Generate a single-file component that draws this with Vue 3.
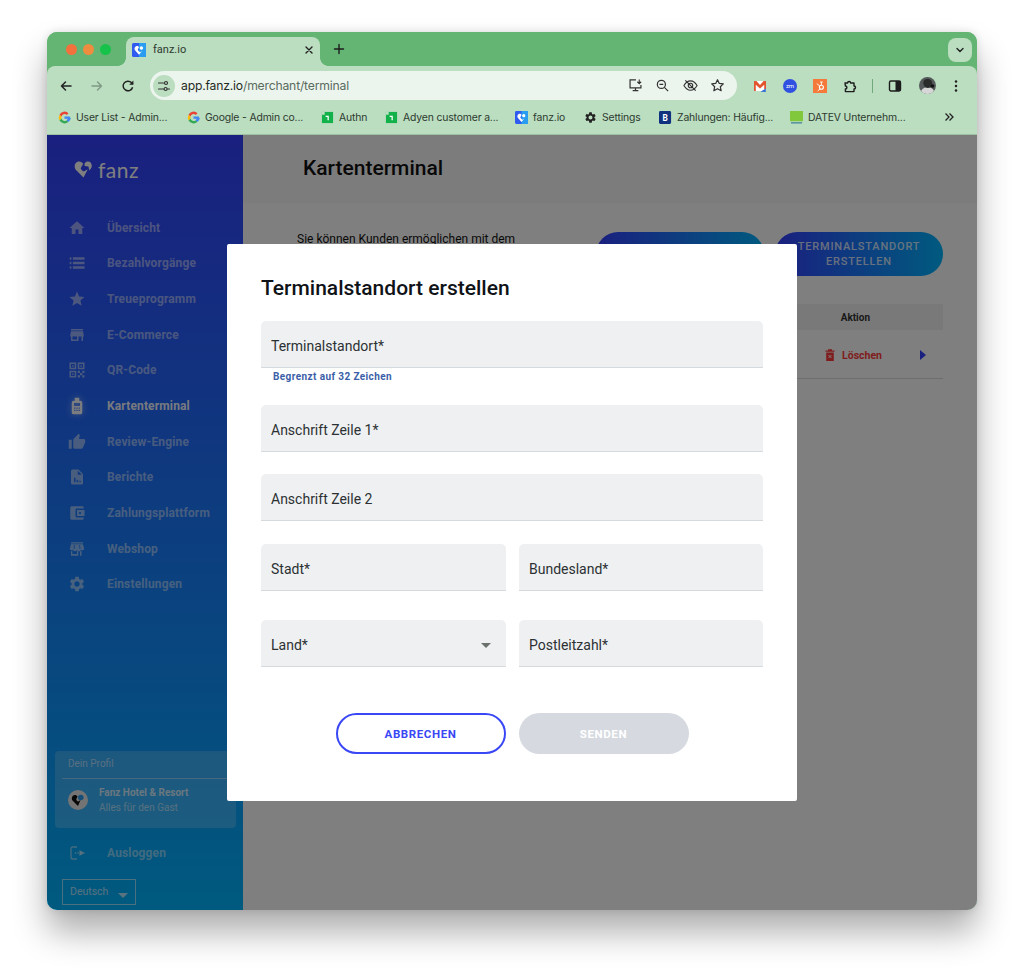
<template>
  <div class="page">
    <div class="window">
      <!-- Tab-Leiste -->
      <div class="tabstrip">
        <div class="lights">
          <span class="light red"></span>
          <span class="light amber"></span>
          <span class="light green"></span>
        </div>
        <div class="tab">
          <svg class="favicon" viewBox="0 0 14 14">
            <rect width="14" height="14" rx="1.5" fill="#2f5bf0" />
            <rect x="7" width="7" height="14" fill="#2a9df0" />
            <path d="M7 11.8 3.2 7.6C1.8 5.8 3 3 5 3c1 0 1.6.5 2 1.2L5.8 6.6c.5 1.4 1.2 2.2 2.3 2.7l2-1.2z" fill="#fff" />
            <circle cx="9.4" cy="5" r="1.7" fill="#fff" />
          </svg>
          <span class="tab-title">fanz.io</span>
          <svg class="tab-close" viewBox="0 0 10 10"><path d="M2 2l6 6M8 2l-6 6" stroke="#222" stroke-width="1.4" stroke-linecap="round" /></svg>
        </div>
        <svg class="new-tab" viewBox="0 0 12 12"><path d="M6 1.5v9M1.5 6h9" stroke="#1c1c1c" stroke-width="1.4" stroke-linecap="round" /></svg>
        <div class="tab-menu">
          <svg viewBox="0 0 10 10" width="10" height="10"><path d="M2 3.5 5 6.5 8 3.5" fill="none" stroke="#222" stroke-width="1.4" stroke-linecap="round" /></svg>
        </div>
      </div>

      <!-- Adressleiste -->
      <div class="toolbar">
        <div class="nav-row">
          <svg class="nav-icon" viewBox="0 0 14 14"><path d="M12 7H2.5M6.5 3 2.5 7l4 4" fill="none" stroke="#222" stroke-width="1.5" stroke-linecap="round" stroke-linejoin="round" /></svg>
          <svg class="nav-icon" viewBox="0 0 14 14"><path d="M2 7h9.5M7.5 3l4 4-4 4" fill="none" stroke="#7f9a84" stroke-width="1.4" stroke-linecap="round" stroke-linejoin="round" /></svg>
          <svg class="nav-icon" viewBox="0 0 14 14"><path d="M11.6 8.2A4.8 4.8 0 1 1 10.4 3.6L12 5" fill="none" stroke="#222" stroke-width="1.5" /><path d="M12.4 1.6v4.2H8.2z" fill="#222" /></svg>
          <div class="omnibox">
            <span class="site-info">
              <svg viewBox="0 0 14 14" width="14" height="14">
                <path d="M1.5 4h5M10.5 10h2M1.5 10h5" stroke="#333" stroke-width="1.2" stroke-linecap="round" />
                <circle cx="9" cy="4" r="1.5" fill="none" stroke="#333" stroke-width="1.2" />
                <circle cx="8.6" cy="10" r="1.5" fill="none" stroke="#333" stroke-width="1.2" />
              </svg>
            </span>
            <span class="url"><span class="url-host">app.fanz.io</span>/merchant/terminal</span>
            <div class="omni-icons">
              <svg viewBox="0 0 16 16"><path d="M8.5 2H2.2v8.600h11.600V7.500M8 10.600V13M5 13.400h6" fill="none" stroke="#333" stroke-width="1.3" /><path d="M12 1.500v4M10 4l2 2 2-2" fill="none" stroke="#333" stroke-width="1.2" /></svg>
              <svg viewBox="0 0 16 16"><circle cx="6.800" cy="6.800" r="4.300" fill="none" stroke="#333" stroke-width="1.3" /><path d="M10 10l4 4M4.800 6.800h4" stroke="#333" stroke-width="1.3" /></svg>
              <svg viewBox="0 0 16 16"><path d="M1 8c2-3.400 4.400-5 7-5s5 1.600 7 5c-2 3.400-4.400 5-7 5s-5-1.600-7-5z" fill="none" stroke="#333" stroke-width="1.2" /><circle cx="8" cy="8" r="2.400" fill="none" stroke="#333" stroke-width="1.2" /><path d="M2.500 2.500l11 11" stroke="#333" stroke-width="1.3" /></svg>
              <svg viewBox="0 0 16 16"><path d="m8 1.800 1.900 4 4.300.5-3.200 3 .9 4.300L8 11.400l-3.900 2.200.9-4.300-3.200-3 4.300-.5z" fill="none" stroke="#333" stroke-width="1.3" stroke-linejoin="round" /></svg>
            </div>
          </div>
          <div class="ext-icons">
            <svg viewBox="0 0 14 14"><rect x="1" y="2" width="12" height="10" fill="#fff" /><path d="M1 2h2.400L7 6l3.600-4H13v8h-1.800V5.800L7 9.400 2.800 5.800V12H1z" fill="#e2552f" /><path d="M7.500 12.800 12.800 9.500V13z" fill="#2f6fd6" /></svg>
            <svg viewBox="0 0 14 14"><circle cx="7" cy="7" r="7" fill="#2f50e0" /><text x="7" y="9" text-anchor="middle" font-size="6" fill="#fff" font-family="Roboto, sans-serif">zm</text></svg>
            <svg viewBox="0 0 14 14"><rect width="14" height="14" fill="#f5793b" /><circle cx="8.400" cy="8.200" r="2" fill="none" stroke="#fff" stroke-width="1.1" /><path d="M8.400 6V3M7 3h2.800M7 10l-2.300 2M6.800 7 3.800 4.600" stroke="#fff" stroke-width=".9" /></svg>
            <svg viewBox="0 0 14 14"><path d="M2 4h2.600a1.500 1.500 0 0 1 3 0h3.400v3a1.500 1.500 0 0 1 0 3v2.600H2.400V10a1.500 1.500 0 0 0 0-3z" fill="none" stroke="#1c1c1c" stroke-width="1.4" stroke-linejoin="round" /></svg>
          </div>
          <span class="tool-sep"></span>
          <svg class="panel-icon" viewBox="0 0 14 14"><rect x="1.500" y="2" width="11" height="10" rx="1.400" fill="none" stroke="#1c1c1c" stroke-width="1.4" /><rect x="7.500" y="2" width="5" height="10" fill="#1c1c1c" /></svg>
          <svg class="profile-pic" viewBox="0 0 17 17">
            <circle cx="8.500" cy="8.500" r="8.500" fill="#55595a" />
            <path d="M2 14c2-3 4-4 6.500-4s5 1 6.500 4a8.500 8.500 0 0 1-13 0z" fill="#d6d6d6" />
            <path d="M5 3.500c2-2 6-2 7.500.5s.5 5.500-1.500 6.500-5 .5-6-2-1-3.500 0-5z" fill="#2a2c2c" />
            <circle cx="13.500" cy="9" r="1.800" fill="#111" />
          </svg>
          <svg class="dots" viewBox="0 0 4 14"><circle cx="2" cy="2.500" r="1.250" fill="#222" /><circle cx="2" cy="7" r="1.250" fill="#222" /><circle cx="2" cy="11.500" r="1.250" fill="#222" /></svg>
        </div>
        <div class="bookmarks">
          <div v-for="b in bookmarks" :key="b.label + b.w" class="bookmark" :style="{ width: b.w + 'px' }">
            <svg v-if="b.icon === 'google'" class="bm-icon" viewBox="0 0 14 14">
              <path d="M7 3.200c1 0 1.800.4 2.400 1L11.300 2.300A6 6 0 0 0 1.600 4.200l2.200 1.700C4.300 4.300 5.500 3.200 7 3.200z" fill="#ea4335" />
              <path d="M12.800 7.200c0-.5 0-.9-.1-1.200H7v2.400h3.300c-.2.800-.6 1.400-1.200 1.800l2 1.600c1.100-1.100 2.700-2.600 2.700-4.600z" fill="#4285f4" />
              <path d="M3.800 8.200 1.600 9.900a6 6 0 0 0 9.500 1.900l-2-1.600c-.6.4-1.300.6-2.100.6-1.500 0-2.800-1-3.200-2.600z" fill="#34a853" />
              <path d="M3.800 8.200a3.600 3.600 0 0 1 0-2.300L1.600 4.200a6 6 0 0 0 0 5.700z" fill="#fbbc05" />
            </svg>
            <svg v-else-if="b.icon === 'adyen'" class="bm-icon" viewBox="0 0 14 14">
              <rect x="1" y="1" width="12" height="12" fill="#12b24a" />
              <path d="M1 1h3v3H1z" fill="#bbddc0" />
              <path d="M5 5h3.400v5H7V6.400H5z" fill="#fff" />
            </svg>
            <svg v-else-if="b.icon === 'fanz'" class="bm-icon" viewBox="0 0 14 14">
              <rect width="14" height="14" rx="1.500" fill="#2f5bf0" />
              <rect x="7" width="7" height="14" fill="#2a9df0" />
              <path d="M7 11.800 3.200 7.600C1.800 5.800 3 3 5 3c1 0 1.600.5 2 1.200L5.800 6.600c.5 1.400 1.200 2.200 2.300 2.700l2-1.200z" fill="#fff" />
              <circle cx="9.400" cy="5" r="1.700" fill="#fff" />
            </svg>
            <svg v-else-if="b.icon === 'gear'" class="bm-icon" viewBox="0 0 24 24">
              <path :d="icons.gear" fill="#222" />
            </svg>
            <svg v-else-if="b.icon === 'b'" class="bm-icon" viewBox="0 0 14 14">
              <rect width="13" height="14" rx="1.500" fill="#10327e" />
              <text x="6.500" y="10.500" text-anchor="middle" font-size="9" font-weight="700" fill="#fff" font-family="Roboto, sans-serif">B</text>
            </svg>
            <svg v-else class="bm-icon" viewBox="0 0 14 14">
              <rect width="14" height="11" fill="#82c83c" />
              <rect x="1" y="12" width="12" height="1.500" fill="#4b8a9a" />
            </svg>
            <span>{{ b.label }}</span>
          </div>
          <svg class="bm-more" viewBox="0 0 10 10"><path d="M1.500 1.500 5 5 1.500 8.500M5.500 1.500 9 5 5.500 8.500" fill="none" stroke="#222" stroke-width="1.3" /></svg>
        </div>
      </div>

      <!-- App -->
      <div class="app">
        <aside class="sidebar">
          <div class="logo">
            <svg viewBox="0 0 18 18" width="18" height="18">
              <path d="M9.500 17.500 2 10C-.6 7 .9 1.500 5 1.500c2 0 3.300 1 4.200 2.300L6.700 8.300c.7 1.700 1.600 2.600 3.100 3.300l4-2.400z" fill="#fff" />
              <path d="M10.600 3.200c1-1.100 2.100-1.700 3.300-1.700 3.500 0 5 4.400 3 7.100l-1.600 1.800-.9-3.800-3.900-.7z" fill="#fff" />
            </svg>
            <span class="logo-text">fanz</span>
          </div>
          <nav class="menu">
            <a v-for="item in menu" :key="item.label" :class="['menu-item', { active: item.active }]">
              <svg class="menu-icon" viewBox="0 0 24 24">
                <path :d="icons[item.icon]" fill="currentColor" fill-rule="evenodd" />
              </svg>
              <span>{{ item.label }}</span>
            </a>
          </nav>
          <div class="side-bottom">
            <div class="profile-card">
              <div class="profile-head">Dein Profil</div>
              <div class="profile-body">
                <svg class="profile-logo" viewBox="0 0 20 20">
                  <circle cx="10" cy="10" r="10" fill="#e8e8e8" />
                  <path d="M10 16 4.500 10.500C3 8.500 4.200 5 6.800 5c1.300 0 2.200.6 2.800 1.500L8.200 9.300c.4 1.200 1 1.800 2 2.300l2.400-1.500z" fill="#111" />
                  <circle cx="12.800" cy="7.500" r="2.800" fill="#2a9df0" />
                </svg>
                <div class="profile-text">
                  <div class="profile-name">Fanz Hotel &amp; Resort</div>
                  <div class="profile-sub">Alles für den Gast</div>
                </div>
              </div>
            </div>
            <a class="menu-item logout">
              <svg class="menu-icon" viewBox="0 0 24 24">
                <path d="M12 4H6a2 2 0 0 0-2 2v12a2 2 0 0 0 2 2h6" fill="none" stroke="currentColor" stroke-width="1.800" />
                <path d="M9 12h2M12.500 12h2M16 9.500v5l5-2.500z" stroke="currentColor" stroke-width="1.800" fill="currentColor" />
              </svg>
              <span>Ausloggen</span>
            </a>
            <div class="lang">
              <span>Deutsch</span>
              <span class="lang-caret"></span>
            </div>
          </div>
        </aside>

        <main class="content">
          <header class="content-head">Kartenterminal</header>
          <div class="content-body">
            <div class="intro-row">
              <p class="intro">Sie können Kunden ermöglichen mit dem</p>
              <div class="intro-actions">
                <button class="grad-btn"></button>
                <button class="grad-btn">TERMINALSTANDORT ERSTELLEN</button>
              </div>
            </div>
            <div class="table-head"><span>Aktion</span></div>
            <div class="table-row">
              <span class="delete">
                <svg viewBox="0 0 14 14" width="14" height="14">
                  <path d="M2.500 2.500h9v1.200h-9zM5 1.300h4v1.200H5zM3.200 4.400h7.600V13H3.200z" fill="#ff3a3a" />
                  <path d="M5.500 7l3 3M8.500 7l-3 3" stroke="#fff" stroke-width="1" />
                </svg>
                Löschen
              </span>
              <span class="row-arrow"></span>
            </div>
          </div>
        </main>

        <!-- Dialog -->
        <div class="overlay">
          <div class="modal">
            <h2 class="modal-title">Terminalstandort erstellen</h2>
            <div class="field"><span>Terminalstandort*</span></div>
            <div class="hint">Begrenzt auf 32 Zeichen</div>
            <div class="field field-2"><span>Anschrift Zeile 1*</span></div>
            <div class="field field-3"><span>Anschrift Zeile 2</span></div>
            <div class="field-row row-a">
              <div class="field"><span>Stadt*</span></div>
              <div class="field"><span>Bundesland*</span></div>
            </div>
            <div class="field-row row-b">
              <div class="field">
                <span>Land*</span>
                <span class="select-caret"></span>
              </div>
              <div class="field"><span>Postleitzahl*</span></div>
            </div>
            <div class="modal-actions">
              <button class="btn-outline">ABBRECHEN</button>
              <button class="btn-disabled">SENDEN</button>
            </div>
          </div>
        </div>
      </div>
    </div>
  </div>
</template>

<script setup>
const icons = {
  home: 'M10 20v-6h4v6h5v-8h3L12 3 2 12h3v8z',
  list: 'M2 6a1.800 1.800 0 0 1 1.800-1.800h.7v3.600h-.7A1.800 1.800 0 0 1 2 6zM2 12a1.800 1.800 0 0 1 1.800-1.800h.7v3.600h-.7A1.800 1.800 0 0 1 2 12zM2 18a1.800 1.800 0 0 1 1.800-1.800h.7v3.600h-.7A1.800 1.800 0 0 1 2 18zM6.500 4.200H22v3.600H6.500zM6.500 10.200H22v3.600H6.500zM6.500 16.200H22v3.600H6.500z',
  star: 'M12 17.270L18.180 21l-1.640-7.030L22 9.240l-7.190-.610L12 2 9.190 8.630 2 9.240l5.460 4.730L5.820 21z',
  store: 'M20 4H4v2h16V4zm1 10v-2l-1-5H4l-1 5v2h1v6h10v-6h4v6h2v-6h1zm-9 4H6v-4h6v4z',
  shop: 'M4 3h16v1.600H4zM4 5.500h16l1.500 6a2.300 2.300 0 0 1-4.300 1 2.600 2.600 0 0 1-5.200 0 2.600 2.600 0 0 1-5.200 0 2.300 2.300 0 0 1-4.300-1zM8 6.500l-.7 5h1.400l.3-5zM15 6.500l.3 5h1.400l-.7-5zM4 15h1.800v3.500H12V15h1.800v6H4zM16 15h2v6h-2z',
  qr: 'M2 2h9v9H2zM4 4v5h5V4zM5.500 5.500h2v2h-2zM13 2h9v9h-9zM15 4v5h5V4zM16.500 5.500h2v2h-2zM2 13h9v9H2zM4 15v5h5v-5zM5.500 16.500h2v2h-2zM13 13h3v3h-3zM19 13h3v3h-3zM16 16h3v3h-3zM13 19h3v3h-3zM19 19h3v3h-3z',
  terminal: 'M9 1h6v4h1.500A2.500 2.500 0 0 1 19 7.500v13a2.500 2.500 0 0 1-2.500 2.500h-9A2.500 2.500 0 0 1 5 20.500v-13A2.500 2.500 0 0 1 7.500 5H9zM8 8v4h8V8zM8 14v1.500h2V14zm3 0v1.500h2V14zm3 0v1.500h2V14zM8 17v1.500h2V17zm3 0v1.500h2V17zm3 0v1.500h2V17z',
  thumb: 'M1 21h4V9H1v12zm22-11c0-1.100-.9-2-2-2h-6.310l.95-4.570.03-.320c0-.410-.170-.790-.440-1.060L14.170 1 7.590 7.590C7.220 7.950 7 8.450 7 9v10c0 1.100.9 2 2 2h9c.830 0 1.540-.5 1.840-1.220l3.020-7.050c.090-.230.140-.470.140-.730v-2z',
  report: 'M6 2h8l6 6v12a2 2 0 0 1-2 2H6a2 2 0 0 1-2-2V4a2 2 0 0 1 2-2zM13 3.500V9h5.500zM8 13v6h2v-6zm3.500 2.500V19h2v-3.500zM15 17v2h2v-2z',
  wallet: 'M21 18v1c0 1.100-.9 2-2 2H5c-1.110 0-2-.9-2-2V5c0-1.100.890-2 2-2h14c1.100 0 2 .9 2 2v1h-9c-1.110 0-2 .9-2 2v8c0 1.100.890 2 2 2h9zm-9-2h10V8H12v8zm4-2.500c-.830 0-1.500-.670-1.500-1.500s.670-1.500 1.500-1.500 1.500.670 1.500 1.500-.670 1.500-1.500 1.500z',
  gear: 'M19.140 12.940c.040-.3.060-.610.060-.940 0-.320-.020-.640-.070-.940l2.030-1.580c.180-.140.230-.410.120-.610l-1.920-3.320c-.120-.220-.370-.290-.590-.220l-2.390.960c-.5-.380-1.030-.7-1.620-.940l-.360-2.540c-.040-.240-.240-.410-.480-.410h-3.840c-.240 0-.430.170-.470.410l-.360 2.540c-.590.240-1.130.570-1.620.940l-2.390-.960c-.220-.080-.470 0-.590.220L2.740 8.870c-.120.210-.080.470.120.610l2.030 1.580c-.050.3-.090.630-.090.940s.020.640.070.940l-2.030 1.580c-.180.140-.230.410-.120.610l1.920 3.320c.120.220.370.290.590.220l2.390-.960c.5.380 1.030.7 1.620.940l.360 2.540c.050.240.240.410.480.410h3.840c.240 0 .440-.170.470-.41l.360-2.540c.590-.240 1.130-.560 1.620-.940l2.390.960c.220.080.470 0 .590-.22l1.920-3.320c.120-.220.070-.470-.120-.610l-2.010-1.580zM12 15.600c-1.980 0-3.600-1.620-3.600-3.600s1.620-3.600 3.600-3.600 3.600 1.620 3.600 3.600-1.620 3.600-3.600 3.600z'
}

const menu = [
  { label: 'Übersicht', icon: 'home' },
  { label: 'Bezahlvorgänge', icon: 'list' },
  { label: 'Treueprogramm', icon: 'star' },
  { label: 'E-Commerce', icon: 'store' },
  { label: 'QR-Code', icon: 'qr' },
  { label: 'Kartenterminal', icon: 'terminal', active: true },
  { label: 'Review-Engine', icon: 'thumb' },
  { label: 'Berichte', icon: 'report' },
  { label: 'Zahlungsplattform', icon: 'wallet' },
  { label: 'Webshop', icon: 'shop' },
  { label: 'Einstellungen', icon: 'gear' }
]

const bookmarks = [
  { label: 'User List - Admin...', icon: 'google', w: 129 },
  { label: 'Google - Admin co...', icon: 'google', w: 134 },
  { label: 'Authn', icon: 'adyen', w: 64 },
  { label: 'Adyen customer a...', icon: 'adyen', w: 130 },
  { label: 'fanz.io', icon: 'fanz', w: 69 },
  { label: 'Settings', icon: 'gear', w: 75 },
  { label: 'Zahlungen: Häufig...', icon: 'b', w: 131 },
  { label: 'DATEV Unternehm...', icon: 'datev', w: 156 }
]
</script>

<style>
html,
body {
  margin: 0;
  background: #fff;
}
</style>

<style scoped>
.page {
  width: 1024px;
  height: 973px;
  padding: 32px 47px 0;
  box-sizing: border-box;
  font-family: "Roboto", "Liberation Sans", sans-serif;
  overflow: hidden;
}

.window {
  height: 878px;
  border-radius: 10px;
  overflow: hidden;
  display: flex;
  flex-direction: column;
  background: #64b573;
  box-shadow: 0 22px 34px rgba(0, 0, 0, 0.32), 0 0 8px rgba(0, 0, 0, 0.12);
}

/* Browser */
.tabstrip {
  height: 34px;
  flex: none;
  background: #64b573;
  display: flex;
  align-items: flex-end;
  position: relative;
}

.lights {
  display: flex;
  gap: 6px;
  padding: 0 0 11px 19px;
  width: 60px;
  flex: none;
}

.light {
  width: 11px;
  height: 11px;
  border-radius: 50%;
}

.red { background: #f2713c; }
.amber { background: #f08c3e; }
.green { background: #17c24a; }

.tab {
  width: 194px;
  height: 29px;
  background: #bbddc0;
  border-radius: 8px 8px 0 0;
  display: flex;
  align-items: center;
  padding: 0 5px 4px 6px;
  box-sizing: border-box;
  flex: none;
  position: relative;
}

/* ausgestellte Ecken unten am aktiven Tab */
.tab::before,
.tab::after {
  content: "";
  position: absolute;
  bottom: 0;
  width: 8px;
  height: 8px;
}

.tab::before {
  left: -8px;
  background: radial-gradient(circle at 0 0, transparent 7.5px, #bbddc0 8px);
}

.tab::after {
  right: -8px;
  background: radial-gradient(circle at 100% 0, transparent 7.5px, #bbddc0 8px);
}

.favicon {
  width: 14px;
  height: 14px;
  flex: none;
}

.tab-title {
  margin-left: 7px;
  font-size: 11px;
  color: #2c3a2f;
  flex: 1;
}

.tab-close {
  width: 10px;
  height: 10px;
  margin-right: 1px;
}

.new-tab {
  width: 12px;
  height: 12px;
  margin: 0 0 11px 13px;
}

.tab-menu {
  position: absolute;
  right: 5px;
  top: 6px;
  width: 24px;
  height: 24px;
  border-radius: 8px;
  background: #bbddc0;
  display: flex;
  align-items: center;
  justify-content: center;
}

.toolbar {
  height: 69px;
  flex: none;
  background: #bbddc0;
  border-radius: 8px 8px 0 0;
  border-bottom: 1px solid #9dbfa3;
  box-sizing: border-box;
}

.nav-row {
  height: 39px;
  display: flex;
  align-items: center;
  padding-left: 12px;
}

.nav-icon {
  width: 14px;
  height: 14px;
  margin-right: 17px;
  flex: none;
}

.omnibox {
  width: 587px;
  height: 29px;
  margin-left: -2px;
  border-radius: 15px;
  background: #ecf5ed;
  display: flex;
  align-items: center;
  padding: 0 12px 0 3px;
  box-sizing: border-box;
  flex: none;
}

.site-info {
  width: 22px;
  height: 22px;
  border-radius: 50%;
  background: #bbddc0;
  display: flex;
  align-items: center;
  justify-content: center;
  flex: none;
}

.url {
  margin-left: 6px;
  font-size: 12.200px;
  color: #5a6a5e;
  flex: 1;
  font-family: "Inter", "Liberation Sans", sans-serif;
  letter-spacing: -0.2px;
}

.url-host {
  color: #1f2a22;
}

.omni-icons {
  display: flex;
  gap: 12.500px;
  align-items: center;
}

.omni-icons svg {
  width: 15px;
  height: 15px;
}

.ext-icons {
  display: flex;
  gap: 16px;
  margin-left: 16px;
  align-items: center;
}

.ext-icons svg {
  width: 14px;
  height: 14px;
}

.tool-sep {
  width: 1px;
  height: 14px;
  background: #6fa87a;
  margin-left: 15px;
}

.panel-icon {
  width: 14px;
  height: 14px;
  margin-left: 15px;
}

.profile-pic {
  width: 17px;
  height: 17px;
  margin-left: 17px;
}

.dots {
  width: 4px;
  height: 14px;
  margin-left: 18px;
}

.bookmarks {
  height: 25px;
  display: flex;
  align-items: center;
  padding-left: 11px;
  position: relative;
  font-size: 10.400px;
  color: #2c3a2f;
  font-family: "Inter", "Liberation Sans", sans-serif;
  letter-spacing: -0.15px;
}

.bookmark {
  display: flex;
  align-items: center;
  gap: 5px;
  flex: none;
  white-space: nowrap;
}

.bm-icon {
  width: 13px;
  height: 13px;
  flex: none;
}

.bm-more {
  width: 10px;
  height: 10px;
  position: absolute;
  right: 23px;
  top: 7px;
}

/* App */
.app {
  flex: 1;
  display: flex;
  position: relative;
  min-height: 0;
  background: #fff;
}

.sidebar {
  width: 196px;
  flex: none;
  background: linear-gradient(180deg, #3440fe 0%, #00b4ff 100%);
  display: flex;
  flex-direction: column;
  color: #fff;
}

.logo {
  display: flex;
  align-items: center;
  gap: 6px;
  padding: 19px 0 0 27px;
  height: 30px;
}

.logo-text {
  font-family: "Lato", sans-serif;
  font-size: 21px;
  letter-spacing: 0.5px;
  color: #fff;
  line-height: 1;
}

.menu {
  margin-top: 26px;
  display: flex;
  flex-direction: column;
}

.menu-item {
  height: 35.650px;
  display: flex;
  align-items: center;
  padding-left: 21px;
  font-size: 12px;
  font-weight: 700;
  color: rgba(255, 255, 255, 0.52);
  letter-spacing: 0.15px;
}

.menu-icon {
  width: 18px;
  height: 18px;
  margin-right: 21px;
  flex: none;
  color: rgba(255, 255, 255, 0.52);
}

.menu-item.active {
  color: rgba(255, 255, 255, 0.95);
}

.menu-item.active .menu-icon {
  color: rgba(255, 255, 255, 0.95);
  filter: drop-shadow(0 0 3px rgba(255, 255, 255, 0.5));
}

.side-bottom {
  margin-top: auto;
  padding: 0 0 5px 8px;
}

.profile-card {
  width: 181px;
  height: 77px;
  border-radius: 4px;
  background: rgba(255, 255, 255, 0.2);
  box-sizing: border-box;
  padding: 0 7px;
}

.profile-head {
  height: 27px;
  line-height: 26px;
  border-bottom: 1px solid rgba(255, 255, 255, 0.4);
  padding-left: 6px;
  font-size: 10px;
  color: rgba(255, 255, 255, 0.6);
}

.profile-body {
  display: flex;
  align-items: center;
  padding: 6px 0 0 6px;
  gap: 11px;
}

.profile-logo {
  width: 20px;
  height: 20px;
  flex: none;
}

.profile-text {
  font-size: 10px;
  line-height: 15px;
  color: rgba(255, 255, 255, 0.6);
}

.profile-name {
  font-weight: 700;
  color: rgba(255, 255, 255, 0.8);
}

.logout {
  margin-top: 7px;
  padding-left: 13px;
}

.lang {
  margin: 8px 0 0 7px;
  width: 74px;
  height: 26px;
  border: 1px solid rgba(255, 255, 255, 0.6);
  box-sizing: border-box;
  display: flex;
  align-items: center;
  padding: 0 0 2px 7px;
  font-size: 10.500px;
  color: rgba(255, 255, 255, 0.7);
  position: relative;
}

.lang-caret {
  position: absolute;
  right: 7px;
  top: 13px;
  border: 5px solid transparent;
  border-top-color: rgba(255, 255, 255, 0.7);
  border-bottom: 0;
}

.content {
  flex: 1;
  display: flex;
  flex-direction: column;
  min-width: 0;
}

.content-head {
  height: 68px;
  flex: none;
  padding: 0 0 2px 60px;
  display: flex;
  align-items: center;
  font-size: 21px;
  font-weight: 500;
  color: #111;
  background: #f8f8f8;
  box-sizing: border-box;
}

.content-body {
  padding: 29px 34px 0 54px;
}

.intro-row {
  display: flex;
  justify-content: space-between;
  height: 72px;
}

.intro {
  margin: 0;
  font-size: 12px;
  line-height: 14px;
  color: #111;
}

.intro-actions {
  display: flex;
  gap: 11px;
}

.grad-btn {
  width: 168px;
  height: 44px;
  border: 0;
  border-radius: 22px;
  background: linear-gradient(90deg, #3440fe 0%, #00b4ff 100%);
  color: rgba(255, 255, 255, 0.8);
  font-family: inherit;
  font-size: 11px;
  font-weight: 500;
  letter-spacing: 0.8px;
  line-height: 15px;
  padding: 0 4px;
}

.table-head {
  height: 26px;
  background: #f2f3f4;
  display: flex;
  align-items: center;
  justify-content: flex-end;
  padding-right: 73px;
  font-size: 10px;
  font-weight: 700;
  color: #333;
}

.table-row {
  height: 49px;
  border-bottom: 1px solid #dcdcdc;
  display: flex;
  align-items: center;
  justify-content: flex-end;
  box-sizing: border-box;
  padding: 2px 17px 0 0;
}

.delete {
  display: flex;
  align-items: center;
  gap: 5px;
  font-size: 10.500px;
  font-weight: 700;
  color: #ff3a3a;
  margin-right: 38px;
}

.row-arrow {
  border: 5px solid transparent;
  border-left: 6px solid #3440fe;
  border-right: 0;
}

/* Dialog */
.overlay {
  position: absolute;
  inset: 0;
  background: rgba(0, 0, 0, 0.5);
  display: flex;
  align-items: center;
  justify-content: center;
  box-sizing: border-box;
}

.modal {
  width: 570px;
  height: 557px;
  background: #fff;
  border-radius: 2px;
  box-sizing: border-box;
  padding: 31px 34px 0;
  display: flex;
  flex-direction: column;
}

.modal-title {
  margin: 0 0 20px;
  font-size: 21px;
  line-height: 26px;
  font-weight: 500;
  color: #0f1216;
}

.field {
  height: 47px;
  flex: none;
  background: #eff0f2;
  border-bottom: 1.500px solid #d5dade;
  border-radius: 5px 5px 0 0;
  box-sizing: border-box;
  padding: 4px 10px 0;
  display: flex;
  align-items: center;
  justify-content: space-between;
  font-size: 14px;
  color: #2c3033;
}

.hint {
  height: 37px;
  padding: 2px 0 0 12px;
  box-sizing: border-box;
  font-size: 10px;
  font-weight: 700;
  line-height: 13px;
  color: #3b5ea8;
  letter-spacing: 0.4px;
}

.field-3 {
  margin-top: 22px;
}

.field-row {
  display: grid;
  grid-template-columns: 245px 244px;
  column-gap: 13px;
}

.row-a {
  margin-top: 23px;
}

.row-b {
  margin-top: 29px;
}

.select-caret {
  border: 5.500px solid transparent;
  border-top: 5.500px solid #6a716c;
  border-bottom: 0;
  margin-right: 5px;
}

.modal-actions {
  display: flex;
  justify-content: center;
  gap: 13px;
  margin-top: 46px;
}

.modal-actions button {
  width: 170px;
  height: 41px;
  border-radius: 21px;
  font-family: inherit;
  font-size: 11.500px;
  font-weight: 700;
  letter-spacing: 0.6px;
}

.btn-outline {
  background: #fff;
  border: 2px solid #3a47f5;
  color: #3a47f5;
}

.btn-disabled {
  background: #d6dae0;
  border: 0;
  color: #fff;
}
</style>
